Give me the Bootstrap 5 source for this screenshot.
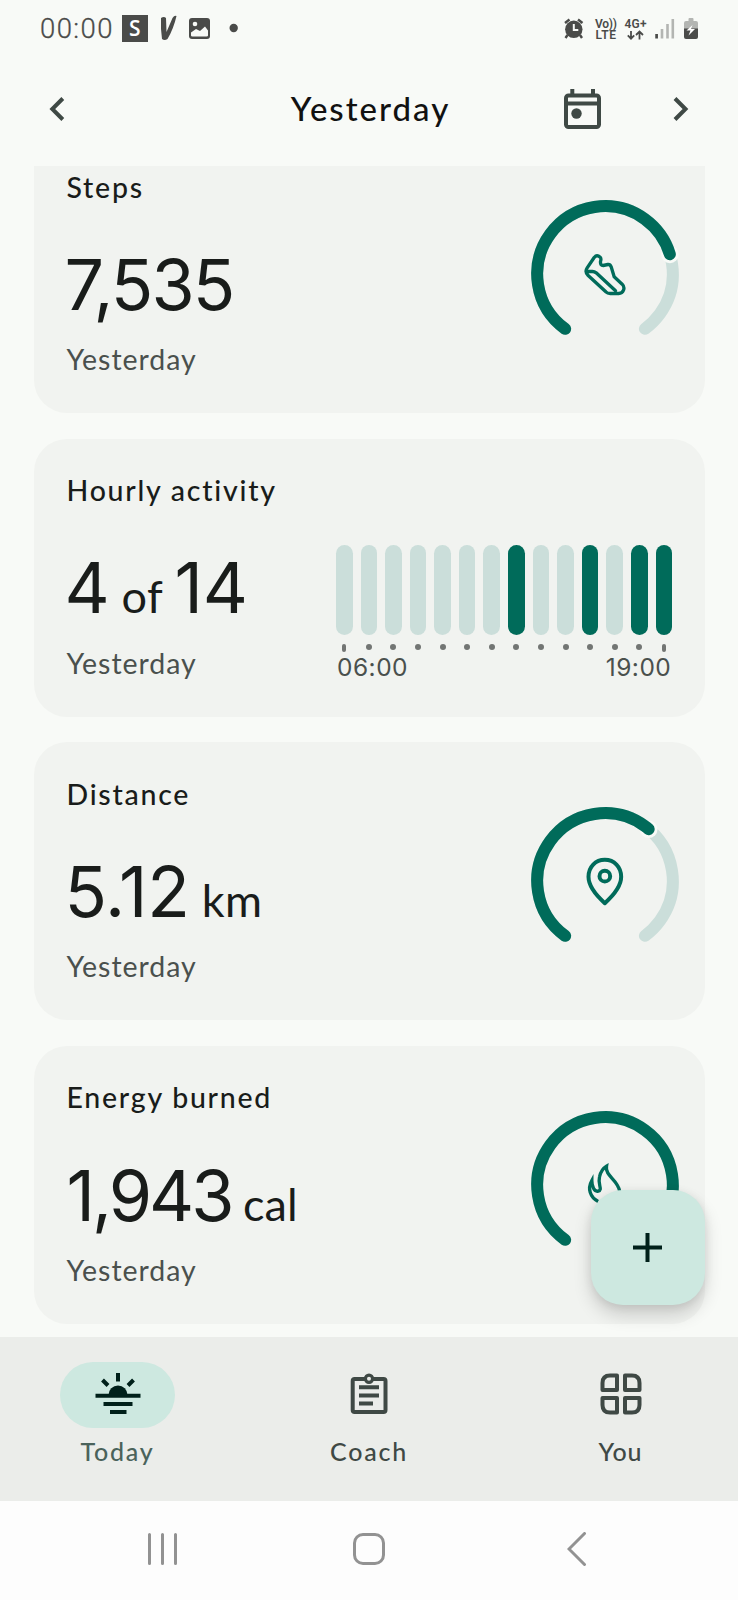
<!DOCTYPE html>
<html lang="en">
<head>
<meta charset="utf-8">
<meta name="viewport" content="width=device-width, initial-scale=1">
<title>Yesterday</title>
<link href="https://cdn.jsdelivr.net/npm/bootstrap@5.3.0/dist/css/bootstrap.min.css" rel="stylesheet">
<style>
  :root { --green: #006b5a; --mint: #cde8e0; --track: #cbdeda; --ink: #191c1a; --muted: #4a504d; --icon: #3f4945; }
  body { font-family: Lato, "Open Sans", sans-serif; background: #f8faf7; color: var(--ink); }
  svg { display: block; flex: none; }
  .screen { width: 738px; height: 1600px; }
  .statusbar { height: 56px; padding: 0 39px 0 40px; color: #4a4b49; }
  .clock { font: 300 27.5px/56px Roboto, sans-serif; width: 82px; -webkit-text-stroke: .3px; letter-spacing: 1.4px; padding-top: 1px; }
  .topbar { height: 110px; padding: 0 49px 5px; }
  .topbar .title-text { font-size: 33px; line-height: 40px; font-weight: 500; color: #111; letter-spacing: 2px; padding: 0 0 2px 3px; }
  .feed { height: 1171px; padding: 0 33.5px; }
  .tile { height: 278px; margin-bottom: 25.6px; border: 0; border-radius: 33px; background: #f1f3f0; padding: 31.5px 25.7px 0 33px; }
  .tile:first-child { margin-top: -31px; }
  .tile-title { font-size: 28.5px; line-height: 40px; font-weight: 500; letter-spacing: 1.75px; margin: 0; }
  .figure-line { font-family: Inter, sans-serif; font-size: 70px; line-height: 84px; height: 84px; margin: 36.3px 0 12.3px -2px; white-space: nowrap; letter-spacing: -1.9px; }
  .figure-line.tight { letter-spacing: -3px; margin-left: 0; }
  .figure-line.loose { letter-spacing: -.2px; }
  .figure-line small { font-family: Lato, sans-serif; font-size: 45px; line-height: 1; letter-spacing: 0; }
  .loose small { letter-spacing: .5px; }
  .when { font-size: 28.5px; line-height: 40px; color: var(--muted); letter-spacing: .95px; margin: 0; }
  .ring { margin-top: 33.5px; fill: none; stroke-linecap: round; stroke-linejoin: round; }
  .hours { width: 336.4px; margin: 75px 6.5px 0 0; }
  .bar { width: 16.6px; height: 90px; border-radius: 9px; background: var(--track); }
  .bar.on { background: var(--green); }
  .ticks { height: 12px; margin-top: 8px; }
  .ticks span { width: 16.6px; display: flex; justify-content: center; }
  .ticks i { width: 6px; height: 6px; border-radius: 3px; background: #727573; margin-top: .5px; }
  .ticks span:first-child i, .ticks span:last-child i { width: 4.4px; height: 8.6px; border-radius: 2px; }
  .range { font-family: Inter, sans-serif; font-size: 24.5px; line-height: 30px; color: var(--muted); padding: 0 1px; margin-top: -3px; letter-spacing: .5px; }
  .tabs { height: 164px; background: #ebedea; padding: 25px 60px 0; }
  .tab { width: 115px; text-align: center; font-size: 25px; line-height: 32px; font-weight: 500; letter-spacing: 1.8px; color: var(--icon); white-space: nowrap; }
  .tab .pill { height: 66px; border-radius: 33px; margin-bottom: 7px; padding-bottom: 2px; }
  .tab.current { color: #4a635b; }
  .tab.current .pill { background: var(--mint); }
  .tab.short { letter-spacing: 1px; }
  .sysbar { height: 99px; background: #fdfdfd; padding: 0 151px 4px 147px; }
  .home-key { margin-right: 8px; }
  .fab { right: 33.5px; bottom: 32.5px; width: 113.5px; height: 114.5px; border-radius: 32px; background: var(--mint); border: 0; box-shadow: 0 10px 18px rgba(0,0,0,.16), 0 2px 10px rgba(0,0,0,.08); }
</style>
</head>
<body>
<div class="screen d-flex flex-column overflow-hidden">

  <div class="statusbar d-flex align-items-center">
    <div class="clock">00:00</div>
    <svg class="me-auto" width="200" height="56" viewBox="122 0 200 56">
      <rect x="121.500" y="15" width="26.500" height="27" fill="#4a4b49"/>
      <text x="134.800" y="36" text-anchor="middle" font-family="Open Sans" font-weight="600" font-size="21" fill="#fff">S</text>
      <path d="M161 18q3-2 5 0l.5 14 6-14q2-3 4-2-3 13-9 23-3 2-5.500 0-1.500-10-1-21z" fill="#4a4b49"/>
      <rect x="189" y="18" width="21" height="21" rx="3" fill="#4a4b49"/>
      <circle cx="195" cy="24" r="2.300" fill="#f8faf7"/>
      <path d="M191 35.500v-3l5-3.500 4 2 5-4.500 3 4v5q0 1-1.500 1h-14q-1.500 0-1.500-1z" fill="#f8faf7"/>
      <circle cx="233.700" cy="28" r="4.200" fill="#4a4b49"/>
    </svg>
    <svg width="136" height="56" viewBox="563 0 136 56" fill="#4a4b49">
      <circle cx="573.800" cy="29.300" r="8.700"/>
      <path d="M565 23l4.500-3.500M582.500 23l-4.500-3.500M567.500 35l-2 3M580 35l2 3" stroke="#4a4b49" stroke-width="2.400" fill="none"/>
      <path d="M573.800 24v6h4.500" stroke="#f8faf7" stroke-width="2" fill="none"/>
      <g font-family="Roboto" font-weight="600" font-size="12">
        <text x="595" y="27.500" textLength="22">Vo))</text>
        <text x="595.500" y="39.300" textLength="20.500">LTE</text>
        <text x="624.500" y="27.500" textLength="22">4G+</text>
      </g>
      <path d="M631 31v7.500M627.800 35.300l3.200 3.400 3.200-3.400M639.500 39.500v-8M636 35l3.500-3.500 3.500 3.500" stroke="#4a4b49" stroke-width="1.800" fill="none"/>
      <path d="M656.600 34v4.500" stroke="#4a4b49" stroke-width="2.700"/>
      <path d="M662 29v9.500M667.500 24v14.500M672.800 19v19.500" stroke="#b3b5b2" stroke-width="2.600"/>
      <path d="M686 21h2.500v-2q0-1 1-1h3q1 0 1 1v2h2.500q2 0 2 2v6h-14v-6q0-2 2-2z" fill="#b3b5b2"/>
      <path d="M684 28.500h14v8.500q0 2-2 2h-10q-2 0-2-2z"/>
      <path d="M692.500 25l-6 5.500h4l-2 5 6.500-6.500h-4z" fill="#fff"/>
    </svg>
  </div>

  <div class="topbar d-flex align-items-center justify-content-between position-relative">
    <svg width="16" height="24" viewBox="0 0 16 24" fill="none" stroke="#3f4945" stroke-width="4"><path d="M13.800 1.500L3.300 12l10.500 10.500"/></svg>
    <div class="title-text position-absolute start-0 end-0 text-center">Yesterday</div>
    <div class="d-flex align-items-center">
      <svg width="37" height="42" viewBox="0 0 37 42" style="margin-right:72px" fill="none" stroke="#3f4945" stroke-width="4"><rect x="2" y="7.500" width="33" height="31.500" rx="2.500"/><path d="M2 15.500h33M8.300 1v7M29 1v7"/><circle cx="12.500" cy="25.500" r="5.200" fill="#3f4945" stroke="none"/></svg>
      <svg width="16" height="24" viewBox="0 0 16 24" fill="none" stroke="#3f4945" stroke-width="4"><path d="M2 1.500L12.500 12 2 22.500"/></svg>
    </div>
  </div>

  <div class="position-relative">
    <main class="feed overflow-hidden">
      <section class="tile card flex-row justify-content-between align-items-start">
        <div>
          <h2 class="tile-title">Steps</h2>
          <p class="figure-line">7,535</p>
          <p class="when">Yesterday</p>
        </div>
        <svg class="ring" width="148" height="148" viewBox="-74 -74 148 148">
          <circle r="67.800" pathLength="360" stroke="#cbdeda" stroke-width="12" stroke-dasharray="288 360" transform="rotate(126)"/>
          <circle cx="64.900" cy="-19.600" r="8.800" fill="#f8faf7"/>
          <circle r="67.800" pathLength="360" stroke="#006b5a" stroke-width="12" stroke-dasharray="217 360" transform="rotate(126)"/>
          <g transform="scale(.3333) translate(-314.500 -341.500)" stroke="#006b5a" stroke-width="10">
            <path d="M261 323L282 292Q290 282 300 291Q304 295 301 304Q300 316 309 316L323 313Q330 312 333 320L342 350L366 372Q374 380 370 390Q366 400 356 400H330Q322 400 317 395L264 346Q253 335 261 323Z"/>
            <path d="M261 334H277Q283 334 288 338L346 392"/>
          </g>
        </svg>
      </section>

      <section class="tile card flex-row justify-content-between align-items-start">
        <div>
          <h2 class="tile-title">Hourly activity</h2>
          <p class="figure-line loose">4<small> of </small>14</p>
          <p class="when">Yesterday</p>
        </div>
        <div class="hours">
          <div class="d-flex justify-content-between">
            <div class="bar"></div><div class="bar"></div><div class="bar"></div><div class="bar"></div><div class="bar"></div><div class="bar"></div><div class="bar"></div><div class="bar on"></div><div class="bar"></div><div class="bar"></div><div class="bar on"></div><div class="bar"></div><div class="bar on"></div><div class="bar on"></div>
          </div>
          <div class="ticks d-flex justify-content-between">
            <span><i></i></span><span><i></i></span><span><i></i></span><span><i></i></span><span><i></i></span><span><i></i></span><span><i></i></span><span><i></i></span><span><i></i></span><span><i></i></span><span><i></i></span><span><i></i></span><span><i></i></span><span><i></i></span>
          </div>
          <div class="range d-flex justify-content-between"><span>06:00</span><span>19:00</span></div>
        </div>
      </section>

      <section class="tile card flex-row justify-content-between align-items-start">
        <div>
          <h2 class="tile-title">Distance</h2>
          <p class="figure-line loose">5.12<small> km</small></p>
          <p class="when">Yesterday</p>
        </div>
        <svg class="ring" width="148" height="148" viewBox="-74 -74 148 148">
          <circle r="67.800" pathLength="360" stroke="#cbdeda" stroke-width="12" stroke-dasharray="288 360" transform="rotate(126)"/>
          <circle cx="43.700" cy="-51.800" r="8.800" fill="#f8faf7"/>
          <circle r="67.800" pathLength="360" stroke="#006b5a" stroke-width="12" stroke-dasharray="184.200 360" transform="rotate(126)"/>
          <g transform="scale(.3333) translate(-314.500 -302.500)" stroke="#006b5a" stroke-width="12">
            <path d="M314 369C286 344 265 318 265 290C265 260 286 239 314 239S363 260 363 290C363 318 342 344 314 369Z"/>
            <circle cx="314" cy="288" r="16"/>
          </g>
        </svg>
      </section>

      <section class="tile card flex-row justify-content-between align-items-start">
        <div>
          <h2 class="tile-title">Energy burned</h2>
          <p class="figure-line tight">1,943<small> cal</small></p>
          <p class="when">Yesterday</p>
        </div>
        <svg class="ring" width="148" height="148" viewBox="-74 -74 148 148">
          <circle r="67.800" pathLength="360" stroke="#006b5a" stroke-width="12" stroke-dasharray="288 360" transform="rotate(126)"/>
          <path transform="scale(.3333) translate(-314.500 -314.500)" stroke="#006b5a" stroke-width="10" stroke-linecap="butt" stroke-linejoin="miter" d="M294 364C270 352 261 326 275 301C275 318 282 336 294 333C309 328 292 314 298 290C302 272 309 264 319 258C314 288 353 298 358 332C360 352 345 378 314 378"/>
        </svg>
      </section>
    </main>
    <button class="fab position-absolute d-flex align-items-center justify-content-center p-0" type="button" aria-label="Add">
      <svg width="29" height="29" viewBox="0 0 29 29" stroke="#00201a" stroke-width="4"><path d="M14.500 0v29M0 14.500h29"/></svg>
    </button>
  </div>

  <nav class="tabs d-flex justify-content-between">
    <div class="tab current">
      <div class="pill d-flex align-items-center justify-content-center">
        <svg width="46" height="46" viewBox="0 0 46 46" stroke="#00201a" stroke-width="4" fill="none"><path d="M.5 24.800h45M8.500 33h29M15 41h16.500M23 2v8.500M7.500 9l5.500 5.500M38.500 9L33 14.500"/><path d="M13.500 24a9.500 9.500 0 0 1 19 0z" fill="#00201a" stroke="none"/></svg>
      </div>Today
    </div>
    <div class="tab">
      <div class="pill d-flex align-items-center justify-content-center">
        <svg width="38" height="44" viewBox="0 0 38 44" stroke="#3f4945" stroke-width="4" fill="none"><rect x="2.700" y="7" width="32.800" height="33" rx="2"/><path d="M9 15.300h20M9 23.500h20M9 31.500h14"/><circle cx="19" cy="6.700" r="3.600" stroke-width="3.200" fill="#ebedea"/></svg>
      </div>Coach
    </div>
    <div class="tab short">
      <div class="pill d-flex align-items-center justify-content-center">
        <svg width="42" height="42" viewBox="0 0 42 42" stroke="#3f4945" stroke-width="4" stroke-linejoin="round" fill="none"><path d="M17 2.500v14.500H2.500V10Q2.500 2.500 10 2.500zM25 2.500v14.500H39.500V10Q39.500 2.500 32 2.500zM17 39.500V25H2.500v7q0 7.500 7.500 7.500zM25 39.500V25H39.500v7q0 7.500-7.500 7.500z"/></svg>
      </div>You
    </div>
  </nav>

  <div class="sysbar d-flex align-items-center justify-content-between">
    <svg width="31" height="32" viewBox="0 0 31 32" stroke="#929292" stroke-width="3" stroke-linecap="round"><path d="M2.500 1.500v29M15.500 1.500v29M28.500 1.500v29"/></svg>
    <svg class="home-key" width="32" height="32" viewBox="0 0 32 32" stroke="#929292" stroke-width="3" fill="none"><rect x="1.500" y="1.500" width="29" height="29" rx="8.500"/></svg>
    <svg width="20" height="34" viewBox="0 0 20 34" stroke="#929292" stroke-width="3" fill="none" stroke-linecap="round"><path d="M17.500 1.500L2 17l15.500 15.500"/></svg>
  </div>
</div>
<script src="https://cdn.jsdelivr.net/npm/bootstrap@5.3.0/dist/js/bootstrap.bundle.min.js"></script>
</body>
</html>
